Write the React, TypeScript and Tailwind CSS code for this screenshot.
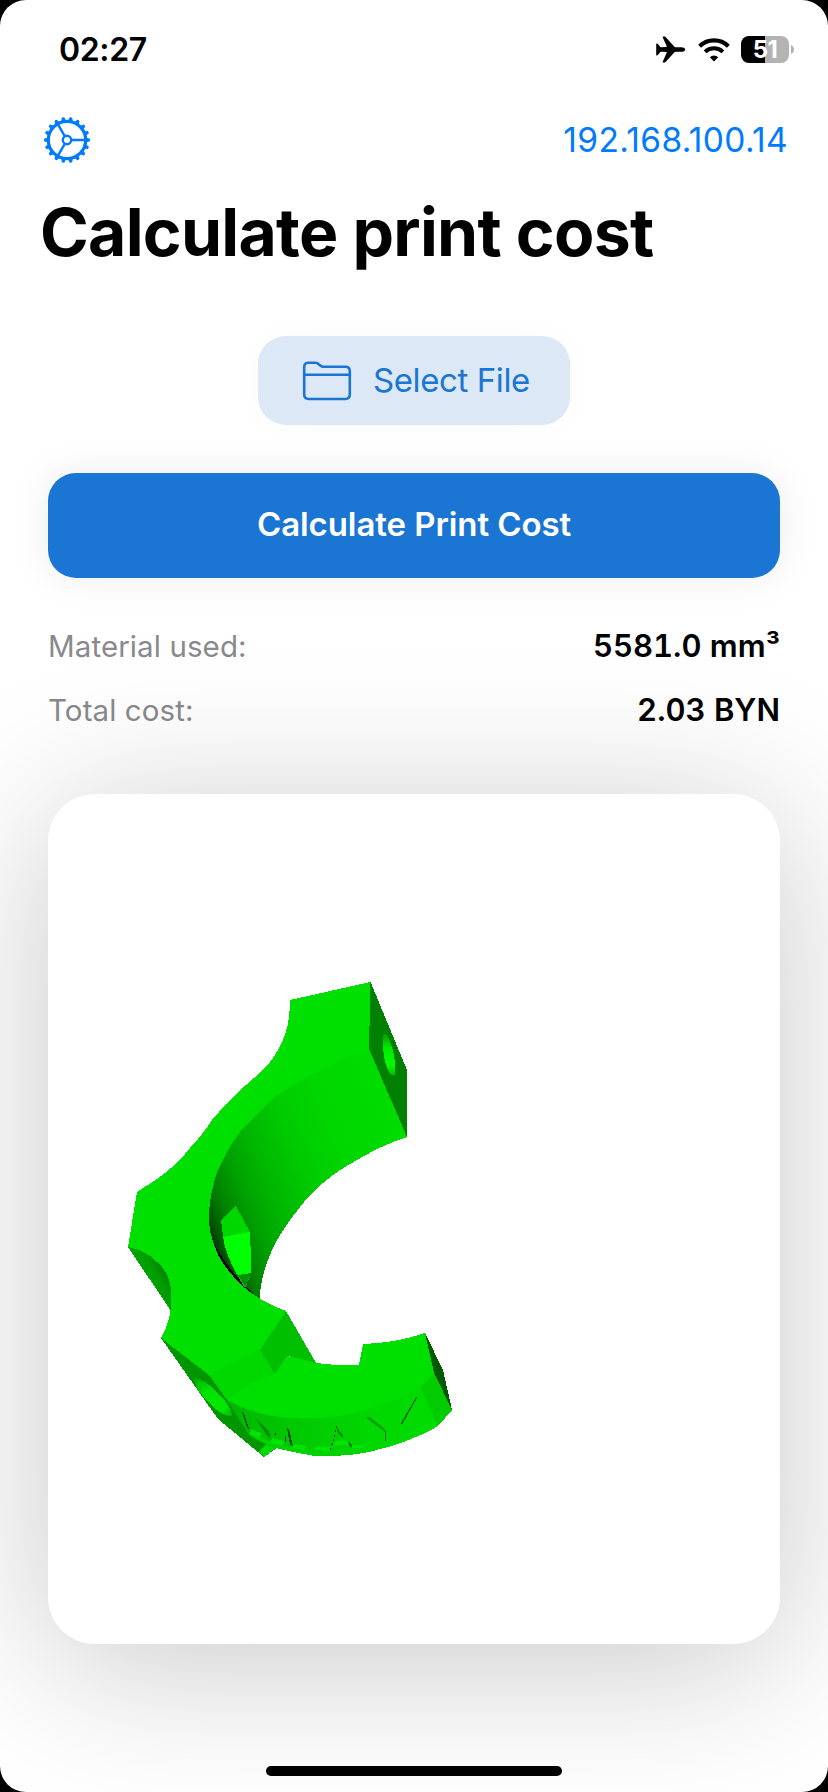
import React from "react";

const teeth = Array.from({ length: 18 }, (_, i) => i * 20);

function GearIcon() {
  return (
    <svg className="size-12" viewBox="-24 -24 48 48" fill="none" stroke="#007aff">
      <circle r="18.7" strokeWidth="3.2" />
      <circle r="4.2" strokeWidth="2.4" />
      {[0, 120, 240].map((a) => (
        <path key={a} d="M4.8 0H18" strokeWidth="2.4" transform={`rotate(${a})`} />
      ))}
      {teeth.map((a) => (
        <path key={a} d="M19.5 -2.3L22.6 -1.4Q23.5 0 22.6 1.4L19.5 2.3Z" fill="#007aff" stroke="none" transform={`rotate(${a})`} />
      ))}
    </svg>
  );
}

function PlaneIcon() {
  return (
    <svg className="h-[27px] w-[30px]" viewBox="0 0 30 27">
      <path
        d="M29.2 13.5C29.2 12 27.3 11.2 25.3 11.2H19.6Q18.8 11.2 18.2 10.6L9.8 1.2Q9.3 .6 8.6 .6H7Q6.4 .6 6.7 1.3L10.7 10.3Q11 11.1 10.2 11.1L5.3 11.3Q4.7 11.3 4.3 10.9L1.9 8Q1.6 7.6 1.1 7.6H.6Q.2 7.6 .2 8V19Q.2 19.4 .6 19.4H1.1Q1.6 19.4 1.9 19L4.3 16.1Q4.7 15.7 5.3 15.7L10.2 15.9Q11 15.9 10.7 16.7L6.7 25.7Q6.4 26.4 7 26.4H8.6Q9.3 26.4 9.8 25.8L18.2 16.4Q18.8 15.8 19.6 15.8H25.3C27.3 15.8 29.2 15 29.2 13.5Z"
        fill="#000"
      />
    </svg>
  );
}

function WifiIcon() {
  return (
    <svg className="h-[24px] w-[32px]" viewBox="0 0 32 24" fill="none" stroke="#000" strokeWidth="4.1">
      <path d="M1.6 8.2A20.6 20.6 0 0 1 30.4 8.2" />
      <path d="M7.1 13.9A12.8 12.8 0 0 1 24.9 13.9" />
      <path d="M16 23.4L11.8 19.2A6 6 0 0 1 20.2 19.2Z" fill="#000" stroke="none" />
    </svg>
  );
}

function Battery() {
  return (
    <div className="flex items-center gap-[2px]">
      <div className="flex h-[27px] w-12 items-center justify-center rounded-[8px] bg-[linear-gradient(90deg,#000_50%,#b3b3b3_50%)] text-[24px] leading-none font-bold tracking-[-0.5px] text-white">
        51
      </div>
      <svg className="h-[9px] w-[3px]" viewBox="0 0 3 9">
        <path d="M0 0Q3 1.5 3 4.5T0 9Z" fill="#b3b3b3" />
      </svg>
    </div>
  );
}

function FolderIcon() {
  return (
    <svg className="h-10 w-[50px]" viewBox="0 0 50 40" fill="none" stroke="#1b75d3" strokeWidth="2.6" strokeLinejoin="round">
      <path d="M2.2 6Q2.2 1.8 6.4 1.8H13.2Q15 1.8 16.4 2.9L18.6 4.7Q19.9 5.8 21.6 5.8H43.4Q47.8 5.8 47.8 10.2V33.6Q47.8 38 43.4 38H6.6Q2.2 38 2.2 33.6Z" />
      <path d="M2.2 13.8H47.8" />
    </svg>
  );
}

function PartModel() {
  return (
    <svg className="h-[850px] w-[732px]" viewBox="48 794 732 850" shapeRendering="crispEdges">
      <defs>
        <linearGradient id="bore" gradientUnits="userSpaceOnUse" x1="209" y1="1241" x2="416.7" y2="1154.4">
          <stop offset="0" stopColor="#002800" />
          <stop offset=".05" stopColor="#005a00" />
          <stop offset=".12" stopColor="#008200" />
          <stop offset=".22" stopColor="#00a000" />
          <stop offset=".33" stopColor="#00b400" />
          <stop offset=".51" stopColor="#00ca00" />
          <stop offset=".71" stopColor="#00d700" />
          <stop offset="1" stopColor="#00dc00" />
        </linearGradient>
        <linearGradient id="notch" gradientUnits="userSpaceOnUse" x1="140" y1="1285" x2="172" y2="1268">
          <stop offset="0" stopColor="#00a800" />
          <stop offset=".55" stopColor="#009c00" />
          <stop offset="1" stopColor="#007000" />
        </linearGradient>
        <linearGradient id="holeTop" gradientUnits="userSpaceOnUse" x1="389" y1="1034" x2="389" y2="1076">
          <stop offset="0" stopColor="#00a000" />
          <stop offset=".35" stopColor="#00ec00" />
          <stop offset=".75" stopColor="#00fa00" />
          <stop offset="1" stopColor="#00b800" />
        </linearGradient>
        <linearGradient id="holeSide" gradientUnits="userSpaceOnUse" x1="194" y1="1378" x2="232" y2="1416">
          <stop offset="0" stopColor="#00a800" />
          <stop offset=".35" stopColor="#00e400" />
          <stop offset=".8" stopColor="#00e800" />
          <stop offset="1" stopColor="#00b000" />
        </linearGradient>
        <linearGradient id="rim" gradientUnits="userSpaceOnUse" x1="227" y1="0" x2="440" y2="0">
          <stop offset="0" stopColor="#00b400" />
          <stop offset=".3" stopColor="#00c800" />
          <stop offset=".7" stopColor="#00d800" />
          <stop offset="1" stopColor="#00dc00" />
        </linearGradient>
      </defs>

      {/* bore wall */}
      <path d="M369 1048Q340 1058 311 1075Q289 1086 270 1101L243 1128Q231 1143 223 1160Q215 1174 213 1187Q209 1202 209 1217Q209 1233 215 1247Q218 1256 223 1263Q232 1277 245 1288L260 1299Q260 1289 262 1280Q264 1270 268 1260Q273 1246 282 1232Q290 1219 300 1207Q310 1194 323 1183Q338 1170 357 1160Q382 1145 407 1137Z" fill="url(#bore)" />
      <path d="M210.5 1232Q213 1245 222 1257Q233 1274 247 1287L254 1295L240 1285Q217 1266 210.5 1232Z" fill="#000" />
      <path d="M236 1206L250 1232L251.5 1273L245 1288Q229 1263 224 1243L221 1220Z" fill="#00d600" />
      <path d="M223 1237L250 1232L251.5 1273L238 1275Q227 1259 223 1237Z" fill="#0f0" />
      <path d="M238 1275L251.5 1273L245 1287Z" fill="#009000" />

      {/* front face of the upper clamp */}
      <path d="M290 1000L370.5 982L369 1049Q340 1058 311 1075Q289 1086 270 1101L243 1128Q231 1143 223 1160Q215 1174 213 1187Q209 1202 209 1217Q209 1233 215 1247Q218 1256 223 1263Q232 1277 245 1288Q263 1303 286 1311L260 1350Q233 1360 209 1375L161 1338Q170 1322 171 1306V1290Q169 1272 157 1262Q145 1250 128 1247L137 1192L157 1179Q177 1165 190 1148Q201 1137 212 1120Q234 1094 260 1073Q277 1057 285 1035Q290 1020 290 1000Z" fill="#00e000" />
      <path d="M370.5 982L407 1070V1137L369 1049Z" fill="#008000" />
      <path d="M383.5 1034Q388 1033 392 1047Q396 1061 395 1075Q390 1077 386 1065Q382 1052 383.5 1034Z" fill="url(#holeTop)" />
      <path d="M128 1247Q145 1250 157 1262Q169 1272 171 1290V1311Z" fill="url(#notch)" />

      {/* lower block */}
      <path d="M286 1311L316 1363L288 1356L275 1374L260 1350Z" fill="#00be00" />
      <path d="M209 1375Q233 1360 260 1350L275 1374Q248 1383 227 1401Z" fill="#00d800" />
      <path d="M161 1338L209 1375L227 1400L250 1432L277 1448L264 1457L218 1419Z" fill="#009600" />
      <path d="M194 1378Q205 1379 219 1394Q232 1408 232 1416Q223 1417 208 1402Q194 1387 194 1378Z" fill="url(#holeSide)" />
      <path d="M277 1447L264 1457L259 1452L266 1444Z" fill="#00dc00" />

      {/* rim with engraved lettering */}
      <path d="M227 1400Q252 1414 280 1417Q308 1420 333 1417Q355 1414 373 1407Q399 1400 420 1387L438 1426Q427 1433 413 1438Q398 1445 380 1449Q364 1454 347 1455Q330 1457 315 1456Q296 1453 280 1449Q262 1444 250 1436Z" fill="url(#rim)" />
      <path d="M250 1434Q262 1444 280 1448Q300 1455 318 1455L347 1454L347 1452Q300 1453 273 1443L251 1433Z" fill="#00d400" />
      <path d="M287 1356Q301 1359 316 1363Q338 1366 359 1365L363 1344Q396 1343 425 1333L434 1373L420 1387Q399 1400 373 1407Q355 1414 333 1417Q308 1420 280 1417Q252 1414 227 1400Q248 1383 275 1374Z" fill="#00e000" />
      <path d="M425 1333L443 1370L452 1410L434 1373Z" fill="#005a00" />
      <path d="M434 1373L452 1410L438 1426L420 1387Z" fill="#00cc00" />
      <path d="M242 1412L244 1413L250 1431L247 1428Z" fill="#005800" />
      <path d="M256 1419L269 1431L271 1440L266 1434Z" fill="#008c00" />
      <path d="M251 1429L262 1434L259 1438L250 1435ZM272 1438L284 1441L283 1446L271 1443ZM294 1444L306 1446L305 1450L292 1448ZM315 1447H331L330 1451L314 1450ZM336 1441H348V1445H333ZM351 1445H366L364 1448H352Z" fill="#00e600" />
      <path d="M287 1428L289 1429L293 1446L290 1445Z" fill="#005800" />
      <path d="M275 1433H276V1435H275ZM285 1436H286V1442H285Z" fill="#030" />
      <path d="M336 1426L343 1435V1439L338 1434ZM348 1441L352 1445V1449L349 1446Z" fill="#009200" />
      <path d="M337 1426L330 1452" stroke="#003800" strokeWidth="1" strokeDasharray="2 2.5" />
      <path d="M365 1417H370L385 1429V1432Z" fill="#00a000" />
      <path d="M385 1431H386V1441H385ZM416 1397L417 1398L402 1425L401 1423Z" fill="#007000" />
    </svg>
  );
}

function ResultRow({ label, value }: { label: string; value: string }) {
  return (
    <div className="flex h-16 items-center justify-between">
      <span className="text-[29.5px] tracking-[0.1px] text-[#89898d]">{label}</span>
      <span className="text-[31px] font-semibold tabular-nums text-black">{value}</span>
    </div>
  );
}

export default function App() {
  return (
    <div className="h-[1792px] w-[828px] bg-black font-['Inter',sans-serif]">
      <div className="flex h-full flex-col overflow-hidden rounded-[26px] bg-white">
        <header className="flex h-[99px] shrink-0 items-center justify-between pr-[34px] pl-[59px]">
          <span className="text-[32px] font-semibold tracking-[-0.35px] text-black">02:27</span>
          <div className="flex items-center">
            <PlaneIcon />
            <span className="ml-3 flex"><WifiIcon /></span>
            <span className="ml-[11px]"><Battery /></span>
          </div>
        </header>
        <nav className="flex h-[82px] shrink-0 items-center justify-between pr-10 pl-[43px]">
          <GearIcon />
          <span className="text-[33.5px] tracking-[0.35px] text-[#007aff]">192.168.100.14</span>
        </nav>
        <h1 className="flex h-[103px] shrink-0 items-center pl-10 text-[66px] font-bold tracking-[-0.72px] whitespace-nowrap text-black">
          Calculate print cost
        </h1>
        <main className="flex flex-col px-12 pt-[52px]">
          <button className="flex h-[89px] w-[312px] items-center self-center rounded-[28px] bg-[#dce8f5] pl-11 text-[33px] tracking-[-0.4px] text-[#1b75d3] shadow-[0_0_30px_rgba(0,0,0,0.025)]">
            <FolderIcon />
            <span className="ml-[21px] whitespace-nowrap">Select File</span>
          </button>
          <button className="mt-12 flex h-[105px] items-center justify-center rounded-[28px] bg-[#1b75d3] pb-px text-[33px] font-semibold tracking-[-0.08px] text-white shadow-[0_0_40px_rgba(0,0,0,0.08)]">
            Calculate Print Cost
          </button>
          <section className="mt-9 flex flex-col">
            <ResultRow label="Material used:" value="5581.0 mm³" />
            <ResultRow label="Total cost:" value="2.03 BYN" />
          </section>
          <section className="mt-[52px] h-[850px] rounded-[47px] bg-white shadow-[0_20px_160px_rgba(0,0,0,0.22)]">
            <PartModel />
          </section>
        </main>
        <footer className="mt-[122px] h-[10px] w-[296px] shrink-0 self-center rounded-full bg-black" />
      </div>
    </div>
  );
}
